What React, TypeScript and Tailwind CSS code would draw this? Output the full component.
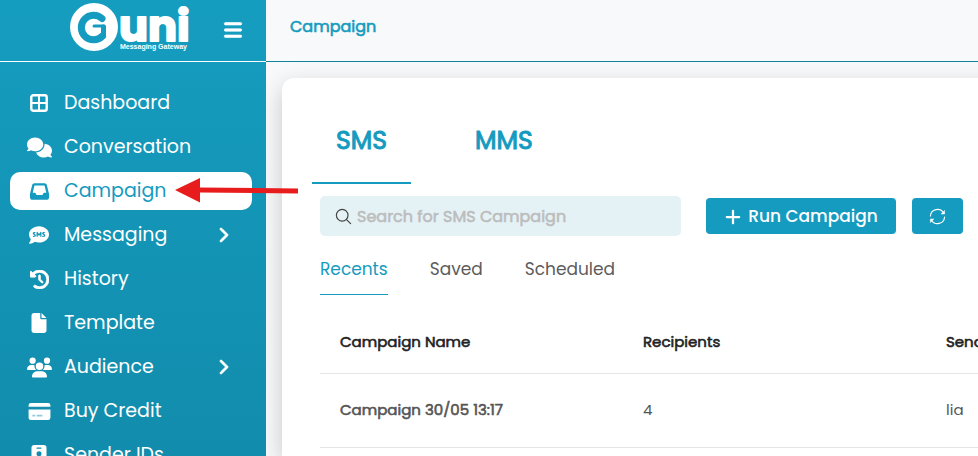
import type { ReactNode } from "react";
import {
  FaBars,
  FaChevronRight,
  FaClockRotateLeft,
  FaCommentSms,
  FaComments,
  FaFile,
  FaIdBadge,
  FaInbox,
  FaPlus,
  FaUsers,
} from "react-icons/fa6";
import { IoSearchOutline } from "react-icons/io5";

function GridIcon() {
  return (
    <svg viewBox="0 0 18 18" className="size-[18px]" fill="none" stroke="currentColor" strokeWidth="2" aria-hidden="true">
      <rect x="1.300" y="1.300" width="15.400" height="15.400" rx="2" strokeWidth="2.400" />
      <path d="M9 1v16M1 9h16" />
    </svg>
  );
}

function CardIcon() {
  return (
    <svg viewBox="0 0 24 20" className="h-[19px] w-[23px]" fill="currentColor" aria-hidden="true">
      <path d="M3 1h18a2.500 2.500 0 0 1 2.500 2.500V5H.5V3.500A2.500 2.500 0 0 1 3 1Z" />
      <path d="M.5 8h23v8.500A2.500 2.500 0 0 1 21 19H3a2.500 2.500 0 0 1-2.500-2.500Z" />
      <path d="M4.500 13.500h3v1.800h-3zM9 13.500h6v1.800H9z" fill="#8fcbdc" />
    </svg>
  );
}

function SyncIcon() {
  return (
    <svg
      viewBox="0 0 18 18"
      className="size-[17px]"
      fill="none"
      stroke="currentColor"
      strokeWidth="1.200"
      strokeLinecap="round"
      strokeLinejoin="round"
      aria-hidden="true"
    >
      <path d="M1.500 8.500A7.500 7.500 0 0 1 15.500 5.300M16.500 9.500A7.500 7.500 0 0 1 2.500 12.700" />
      <path d="M16.500 3v3.300h-3.300ZM1.500 15v-3.300h3.300Z" fill="currentColor" strokeWidth="0.600" />
    </svg>
  );
}

function Logo() {
  return (
    <svg viewBox="0 0 124 54" className="h-[54px] w-[124px] overflow-visible" role="img" aria-label="Guni Messaging Gateway">
      <circle cx="24" cy="27" r="24" fill="#fff" />
      <g fill="none" stroke="#159bbf" strokeLinecap="round" strokeLinejoin="round">
        <path d="M32 18.500A12.300 12.300 0 1 0 32.500 36" strokeWidth="7" />
        <path d="M33.500 36V27" strokeWidth="5" />
        <path d="M24 26h10" strokeWidth="3" />
      </g>
      <text
        x="49"
        y="41"
        fontSize="43"
        fontWeight="700"
        fill="#fff"
        stroke="#fff"
        strokeWidth="2"
        strokeLinejoin="round"
        fontFamily="Poppins, Inter, sans-serif"
      >
        uni
      </text>
      <text x="50" y="49" fontSize="7" fontWeight="700" fill="#fff" fontFamily="'Liberation Sans', Arial, sans-serif">
        Messaging Gateway
      </text>
    </svg>
  );
}

type Item = { label: string; icon: ReactNode; active?: boolean; more?: boolean };

const items: Item[] = [
  { label: "Dashboard", icon: <GridIcon /> },
  { label: "Conversation", icon: <FaComments className="size-[25px]" /> },
  { label: "Campaign", icon: <FaInbox className="size-[19px]" />, active: true },
  { label: "Messaging", icon: <FaCommentSms className="size-[20px]" />, more: true },
  { label: "History", icon: <FaClockRotateLeft className="size-[19px] stroke-[20]" /> },
  { label: "Template", icon: <FaFile className="size-[20px]" /> },
  { label: "Audience", icon: <FaUsers className="size-[25px]" />, more: true },
  { label: "Buy Credit", icon: <CardIcon /> },
  { label: "Sender IDs", icon: <FaIdBadge className="size-[20px]" /> },
];

function Sidebar() {
  return (
    <aside className="flex w-[266px] shrink-0 flex-col bg-linear-to-b from-[#159dc0] to-[#128cac] text-white">
      <div className="flex h-[62px] shrink-0 items-start justify-end border-b border-white pr-[23px]">
        <Logo />
        <button type="button" aria-label="Toggle menu" className="mt-5 ml-[29px]">
          <FaBars className="size-5 stroke-[16]" />
        </button>
      </div>
      <nav className="flex flex-col gap-1.5 pt-[22px] pr-3.5 pl-2.5">
        {items.map((item) => (
          <a
            key={item.label}
            href="#"
            aria-current={item.active ? "page" : undefined}
            className={
              item.active
                ? "flex h-[38px] items-center rounded-[10px] bg-white pr-[21px] pl-4 text-[#159bbf]"
                : "flex h-[38px] items-center rounded-[10px] pr-[21px] pl-4"
            }
          >
            <span className="flex w-[26px] justify-center">{item.icon}</span>
            <span className="ml-3 flex-1 text-[19px]">{item.label}</span>
            {item.more && <FaChevronRight className="size-[16px] stroke-[30]" />}
          </a>
        ))}
      </nav>
    </aside>
  );
}

function PointerArrow() {
  return (
    <svg viewBox="0 0 124 26" className="pointer-events-none absolute top-[177px] left-[175px] h-[26px] w-[124px]" aria-hidden="true">
      <path d="M0 13 25 1v9.500L123 11.500v5L25 15.500V25.500Z" fill="#e81c1c" />
    </svg>
  );
}

const headings = ["Campaign Name", "Recipients", "Sender", "Status"];
const row = ["Campaign 30/05 13:17", "4", "lia", "Sent"];

export default function App() {
  return (
    <div className="relative flex h-screen overflow-hidden bg-[#f8f9fb] font-[Poppins,Inter,sans-serif]">
      <Sidebar />
      <main className="flex min-w-0 flex-1 flex-col overflow-hidden">
        <header className="flex h-[62px] shrink-0 items-start border-b border-[#15809d] px-6 pt-[15px]">
          <h1 className="text-base font-normal text-[#159bbf] [-webkit-text-stroke:0.6px]">Campaign</h1>
        </header>
        <section className="mt-4 -mr-10 ml-4 flex-1 rounded-t-xl bg-white pt-8 pr-[55px] pl-[30px] shadow-[0_8px_24px_rgba(0,0,0,0.2)]">
          <div role="tablist" className="flex gap-10 text-[25px] font-normal text-[#159bbf] [-webkit-text-stroke:1px]">
            <button type="button" role="tab" aria-selected="true" className="h-[74px] w-[99px] border-b-2 border-[#159bbf] pb-2.5">
              SMS
            </button>
            <button type="button" role="tab" aria-selected="false" className="h-[74px] px-6 pb-3">
              MMS
            </button>
          </div>
          <div className="mt-3 ml-2 flex items-center">
            <label className="flex h-10 min-w-0 flex-1 items-center gap-1 rounded-[5px] bg-[#e4f2f6] px-3.5">
              <IoSearchOutline className="size-[19px] shrink-0 text-[#444]" />
              <input
                type="search"
                aria-label="Search for SMS Campaign"
                placeholder="Search for SMS Campaign"
                className="min-w-0 flex-1 bg-transparent pt-0.5 text-base outline-none placeholder:text-[#bdbdbd] placeholder:[-webkit-text-stroke:0.6px]"
              />
            </label>
            <button type="button" className="ml-[25px] flex h-9 w-[190px] items-center justify-center gap-1.5 rounded-[4px] bg-[#159bbf] pt-px text-[17px] font-medium text-white">
              <FaPlus className="size-[18px]" />
              Run Campaign
            </button>
            <button type="button" aria-label="Refresh" className="ml-4 flex h-9 w-[51px] items-center justify-center rounded-[4px] bg-[#159bbf] text-white">
              <SyncIcon />
            </button>
          </div>
          <div role="tablist" className="mt-5 ml-2 flex gap-[42px] text-[17px] text-[#5c5c5c]">
            <button type="button" role="tab" aria-selected="true" className="h-[39px] border-b border-[#159bbf] pb-2.5 text-[#159bbf]">
              Recents
            </button>
            <button type="button" role="tab" aria-selected="false" className="h-[39px] pb-[11px]">
              Saved
            </button>
            <button type="button" role="tab" aria-selected="false" className="h-[39px] pb-[11px]">
              Scheduled
            </button>
          </div>
          <div className="mt-3.5 -mr-[15px] ml-2 overflow-hidden">
            <table className="w-[1212px] table-fixed text-left text-[15px]">
              <thead>
                <tr className="h-16 border-b border-[#e4e4e4] text-[#222]">
                  {headings.map((heading) => (
                    <th key={heading} scope="col" className="px-5 pt-0.5 font-normal [-webkit-text-stroke:0.6px]">
                      {heading}
                    </th>
                  ))}
                </tr>
              </thead>
              <tbody>
                <tr className="h-[74px] border-b border-[#e4e4e4] text-[#555]">
                  {row.map((value, index) => (
                    <td key={value} className={index === 0 ? "px-5 [-webkit-text-stroke:0.6px]" : "px-5"}>
                      {value}
                    </td>
                  ))}
                </tr>
              </tbody>
            </table>
          </div>
        </section>
      </main>
      <PointerArrow />
    </div>
  );
}
